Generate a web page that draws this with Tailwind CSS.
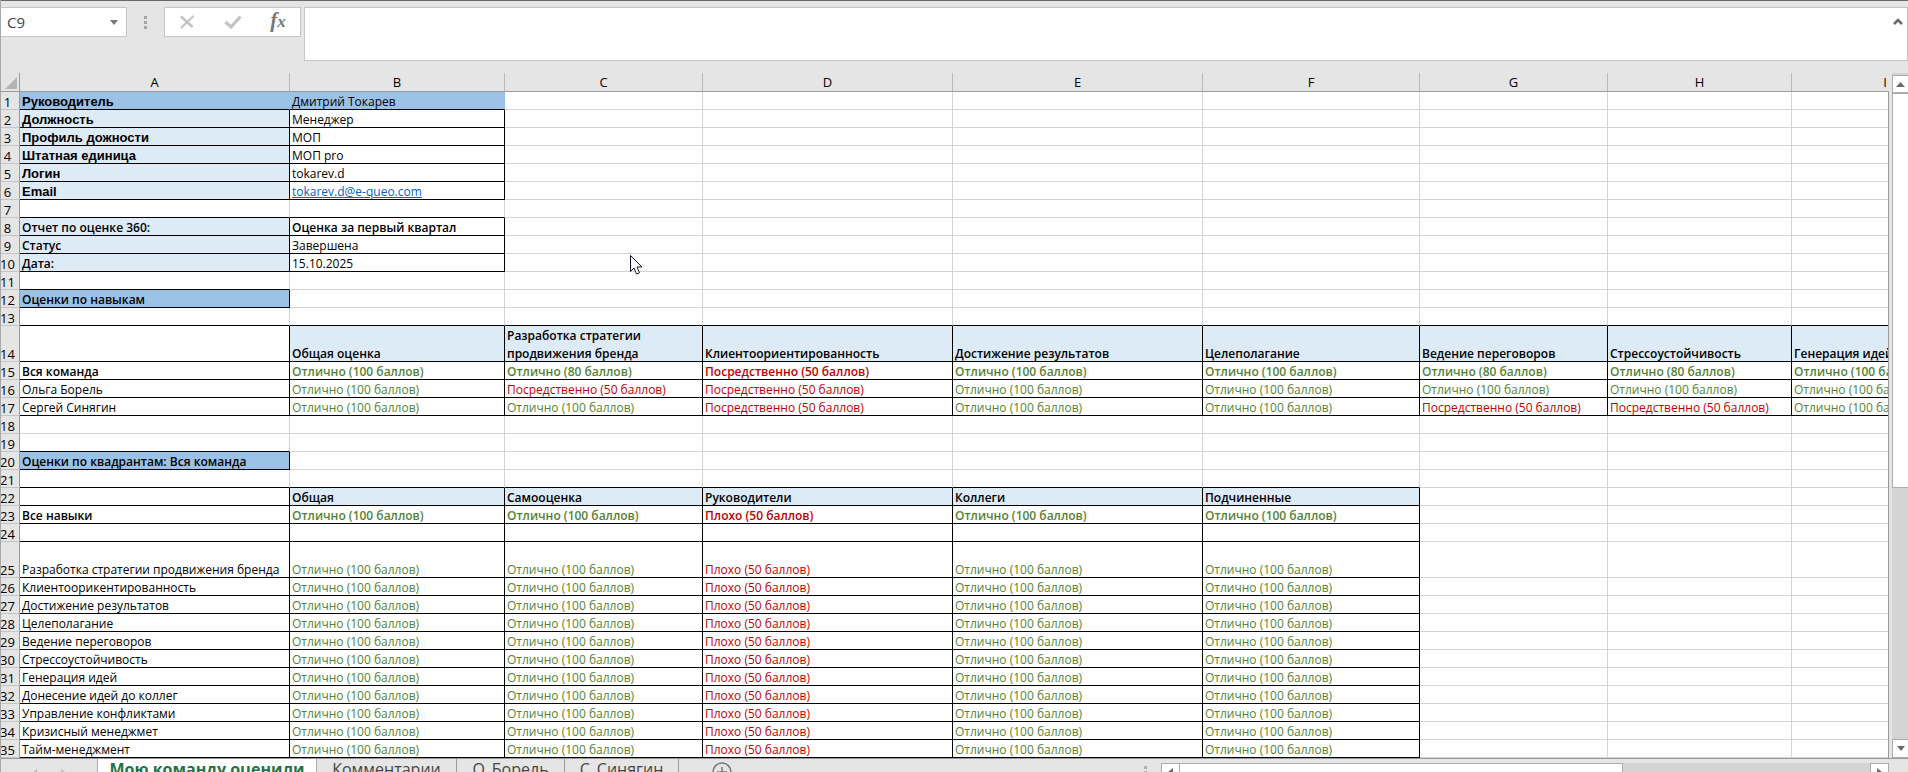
<!DOCTYPE html>
<html lang="ru">
<head>
<meta charset="utf-8">
<title>Отчет по оценке 360</title>
<script src="https://cdn.jsdelivr.net/npm/@tailwindcss/browser@4"></script>
</head>
<body class="flex h-screen flex-col overflow-hidden border-l border-[#a8a8a8] bg-[#e5e5e5] font-['Open_Sans','Noto_Sans',sans-serif] text-[12px] text-black">

<header class="flex h-[73px] shrink-0 items-start border-t border-[#6b6769] pt-[6px]">
  <div class="flex h-[30px] w-[126px] items-center border border-l-0 border-[#c6c6c6] bg-white">
    <input aria-label="Имя ячейки" value="C9" class="h-full w-[109px] bg-transparent pl-[6px] text-[15px] text-[#444] outline-none">
    <button aria-label="Список имён" class="flex h-full flex-1 items-center"><svg width="8" height="5" viewBox="0 0 8 5"><path d="M0 0h8L4 5z" fill="#777"/></svg></button>
  </div>
  <div class="flex h-[30px] w-[37px] flex-col items-center justify-center gap-[2px]">
    <i class="size-[3px] bg-[#a6a6a6]"></i><i class="size-[3px] bg-[#a6a6a6]"></i><i class="size-[3px] bg-[#a6a6a6]"></i>
  </div>
  <div class="flex h-[30px] w-[137px] items-center justify-around border border-[#c6c6c6] bg-white">
    <button aria-label="Отмена"><svg width="16" height="14" viewBox="0 0 16 14" fill="none" stroke="#c3c3c3"><path stroke-width="3" d="M2 1.500 13.500 12"/><path stroke-width="2" d="M14.500 1 2 13"/></svg></button>
    <button aria-label="Ввод"><svg width="18" height="14" viewBox="0 0 18 14" fill="none" stroke="#c3c3c3" stroke-width="3.200"><path d="M1.500 7 7 12 16.500 1.500"/></svg></button>
    <button aria-label="Вставить функцию" class="pb-[2px] font-['Liberation_Serif',serif] text-[21px] leading-[24px] font-bold text-[#777] italic">f<span class="text-[17px]">x</span></button>
  </div>
  <div class="ml-[3px] flex h-[54px] min-w-0 flex-1 border border-[#c6c6c6] bg-white">
    <textarea aria-label="Строка формул" class="min-w-0 flex-1 resize-none outline-none"></textarea>
    <button aria-label="Свернуть строку формул" class="mt-[10px] mr-[4px] h-[7px]"><svg width="10" height="7" viewBox="0 0 10 7" fill="none" stroke="#6a6a6a" stroke-width="2.600"><path d="M1 6 5 2 9 6"/></svg></button>
  </div>
</header>

<main class="flex min-h-0 flex-1">
  <div class="relative min-w-0 flex-1 self-start overflow-hidden">
    <table class="w-[1978px] table-fixed border-separate border-spacing-0">
      <colgroup><col class="w-[19px]"><col class="w-[270px]"><col class="w-[215px]"><col class="w-[198px]"><col class="w-[250px]"><col class="w-[250px]"><col class="w-[217px]"><col class="w-[188px]"><col class="w-[184px]"><col class="w-[187px]"></colgroup>
      <thead id="head"></thead>
      <tbody id="body"></tbody>
    </table>
    <div class="pointer-events-none absolute inset-y-0 right-0 mt-[18px] border-r border-[#999]"></div>
    <svg class="pointer-events-none absolute top-[182px] left-[629px]" width="13" height="21" viewBox="0 0 13 21"><path d="M.5.5v16l3.500-3.500 2.500 6 3-1.200-2.500-5.800h5z" fill="#fff" stroke="#14142e"/></svg>
  </div>
  <div class="ml-[3px] flex w-[16px] shrink-0 flex-col bg-[#d4d4d4] pt-[2px]">
    <button aria-label="Вверх" class="flex h-[18px] shrink-0 items-center justify-center border border-r-0 border-[#ababab] bg-white"><svg width="9" height="5" viewBox="0 0 9 5"><path d="M0 5h9L4.500 0z" fill="#6a6a6a"/></svg></button>
    <div class="h-[395px] border-y border-l border-[#ababab] bg-white"></div>
    <div class="flex-1"></div>
    <button aria-label="Вниз" class="flex h-[19px] shrink-0 items-center justify-center border border-r-0 border-[#ababab] bg-white"><svg width="8" height="5" viewBox="0 0 8 5"><path d="M0 0h8L4 5z" fill="#6a6a6a"/></svg></button>
  </div>
</main>

<footer class="flex h-[14px] shrink-0 items-start overflow-hidden border-t border-[#999] text-[16px] leading-[20px] text-[#444]">
  <div class="flex w-[96px] shrink-0 justify-center gap-[24px] pt-[10px]">
    <svg width="6" height="10" viewBox="0 0 6 10"><path d="M6 0v10L0 5z" fill="#bbb"/></svg>
    <svg width="6" height="10" viewBox="0 0 6 10"><path d="M0 0v10L6 5z" fill="#bbb"/></svg>
  </div>
  <nav class="flex shrink-0">
    <a href="#s1" class="w-[220px] border-x border-[#ababab] bg-white text-center font-bold whitespace-nowrap text-[#217346]">Мою команду оценили</a>
    <a href="#s2" class="w-[140px] border-r border-[#999] text-center">Комментарии</a>
    <a href="#s3" class="w-[108px] border-r border-[#999] text-center">О_Борель</a>
    <a href="#s4" class="w-[114px] border-r border-[#999] text-center">С_Синягин</a>
  </nav>
  <button aria-label="Новый лист" class="ml-[33px] pt-[3px]"><svg width="20" height="20" viewBox="0 0 20 20" fill="none" stroke="#777" stroke-width="1.500"><circle cx="10" cy="10" r="9"/><path d="M10 5v10M5 10h10"/></svg></button>
  <div class="ml-auto flex w-[32px] shrink-0 flex-col gap-[2px] pt-[7px] pl-[15px]"><i class="size-[3px] bg-[#b0b0b0]"></i><i class="size-[3px] bg-[#b0b0b0]"></i></div>
  <div class="mt-[4px] mr-[19px] flex h-[18px] w-[728px] shrink-0 bg-[#d4d4d4]">
    <button aria-label="Влево" class="flex w-[19px] items-center justify-center border border-[#ababab] bg-white"><svg width="5" height="8" viewBox="0 0 5 8"><path d="M5 0v8L0 4z" fill="#6a6a6a"/></svg></button>
    <div class="w-[443px] border border-l-0 border-[#ababab] bg-white"></div>
    <div class="flex-1"></div>
    <button aria-label="Вправо" class="flex w-[19px] items-center justify-center border border-[#ababab] bg-white"><svg width="5" height="8" viewBox="0 0 5 8"><path d="M0 0v8L5 4z" fill="#6a6a6a"/></svg></button>
  </div>
</footer>

<script>
const G = { k: 'Отлично (100 баллов)', c: 'text-[#548235]' };
const G80 = { k: 'Отлично (80 баллов)', c: 'text-[#548235]' };
const P = { k: 'Посредственно (50 баллов)', c: 'text-[#c00000]' };
const B = { k: 'Плохо (50 баллов)', c: 'text-[#c00000]' };
const BLUE = 'bg-[#9bc2e6]', PALE = 'bg-[#ddebf7]', BOLD = 'font-semibold', WIDE = "font-bold font-['Liberation_Sans',sans-serif] text-[13px]";
// Each row: cells (t), columns with black rules (ink), columns with only a black bottom rule (under), and a class per column (s).
const rows = {
  1: { t: ['Руководитель', 'Дмитрий Токарев'], ink: 2, s: [BLUE + ' ' + WIDE, BLUE] },
  7: { t: [], under: 2 },
  8: { t: ['Отчет по оценке 360:', 'Оценка за первый квартал'], ink: 2, s: [PALE + ' ' + BOLD, BOLD] },
  9: { t: ['Статус', 'Завершена'], ink: 2, s: [PALE + ' ' + BOLD] },
  10: { t: ['Дата:', '15.10.2025'], ink: 2, s: [PALE + ' ' + BOLD] },
  11: { t: [], under: 1 },
  12: { t: ['Оценки по навыкам'], ink: 1, s: [BLUE + ' ' + BOLD] },
  13: { t: [], under: 9 },
  14: { t: ['', 'Общая оценка', 'Разработка стратегии<br>продвижения бренда', 'Клиентоориентированность', 'Достижение результатов', 'Целеполагание', 'Ведение переговоров', 'Стрессоустойчивость', 'Генерация идей'], ink: 9, tall: 1, s: [''].concat(Array(8).fill(PALE + ' ' + BOLD)) },
  15: { t: ['Вся команда', G, G80, P, G, G, G80, G80, G], ink: 9, s: Array(9).fill(BOLD) },
  16: { t: ['Ольга Борель', G, P, P, G, G, G, G, G], ink: 9 },
  17: { t: ['Сергей Синягин', G, G, P, G, G, P, P, G], ink: 9 },
  19: { t: [], under: 1 },
  20: { t: ['Оценки по квадрантам: Вся команда'], ink: 1, s: [BLUE + ' ' + BOLD] },
  21: { t: [], under: 6 },
  22: { t: ['', 'Общая', 'Самооценка', 'Руководители', 'Коллеги', 'Подчиненные'], ink: 6, s: [''].concat(Array(5).fill(PALE + ' ' + BOLD)) },
  23: { t: ['Все навыки', G, G, B, G, G], ink: 6, s: Array(6).fill(BOLD) },
  24: { t: [], ink: 6 }
};
[['Должность', 'Менеджер'], ['Профиль дожности', 'МОП'], ['Штатная единица', 'МОП pro'], ['Логин', 'tokarev.d'], ['Email', '<a href="mailto:tokarev.d@e-queo.com" class="text-[#0563c1] underline">tokarev.d@e-queo.com</a>']]
  .forEach((t, i) => rows[i + 2] = { t, ink: 2, s: [PALE + ' ' + WIDE] });
['Разработка стратегии продвижения бренда', 'Клиентоорикентированность', 'Достижение результатов', 'Целеполагание', 'Ведение переговоров', 'Стрессоустойчивость', 'Генерация идей', 'Донесение идей до коллег', 'Управление конфликтами', 'Кризисный менеджмет', 'Тайм-менеджмент']
  .forEach((n, i) => rows[i + 25] = { t: [n, G, G, B, G, G], ink: 6, tall: i === 0 });

head.innerHTML = '<tr class="h-[19px]"><th class="border-r border-b border-[#999] p-0"><svg class="mt-[2px] ml-[4px]" width="12" height="12" viewBox="0 0 12 12"><path d="M12 0v12H0z" fill="#b4b4b4"/></svg></th>' +
  [...'ABCDEFGHI'].map(l => `<th scope="col" class="border-r border-b border-r-[#b8b8b8] border-b-[#999] p-0 text-[13px] leading-[18px] font-normal">${l}</th>`).join('') + '</tr>';

let out = '';
for (let r = 1; r <= 35; r++) {
  const row = rows[r] || { t: [] };
  out += `<tr class="${row.tall ? 'h-[36px]' : 'h-[18px]'}"><th scope="row" class="border-r border-b border-r-[#999] border-b-[#c4c4c4] p-0 align-bottom text-[13px] font-normal"><div class="-mb-[2px] -ml-[5px] pt-px text-center leading-[18px]">${r}</div></th>`;
  for (let c = 0; c < 9; c++) {
    const v = row.t[c] || '', ink = c < (row.ink || 0);
    const rightLine = r === 1 && c < 2 ? 'border-r-[#9bc2e6]' : ink ? 'border-r-black' : 'border-r-[#d4d4d4]';
    const bottomLine = ink || c < (row.under || 0) ? 'border-b-black' : 'border-b-[#d4d4d4]';
    const style = (row.s && row.s[c]) || '';
    out += `<td class="border-r border-b p-0 align-bottom whitespace-nowrap ${rightLine} ${bottomLine} ${/bg-/.test(style) ? '' : 'bg-white'} ${style} ${v.c || ''}"><div class="-mb-[2px] pt-px pl-[2px] leading-[18px]">${v.k || v}</div></td>`;
  }
  out += '</tr>';
}
body.innerHTML = out;
</script>
</body>
</html>
